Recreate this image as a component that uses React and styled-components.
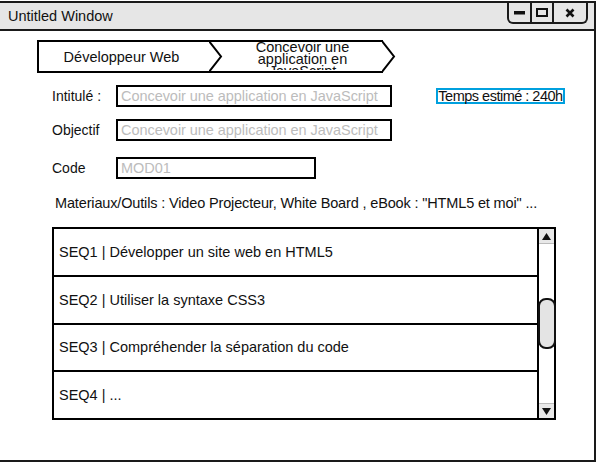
import React from 'react';
import styled, { createGlobalStyle } from "styled-components";

const Global = createGlobalStyle`
  html, body {
    margin: 0;
    padding: 0;
    background: #ffffff;
  }
  body {
    font-family: "Liberation Sans", Arial, sans-serif;
    font-size: 14.5px;
    color: #111;
  }
`;

const Window = styled.div`
  box-sizing: border-box;
  width: 596px;
  height: 461px;
  margin-top: 1px;
  border: 2px solid #1a1a1a;
  border-left: none;
  display: flex;
  flex-direction: column;
  background: #fff;
`;

const TitleBar = styled.div`
  display: flex;
  align-items: flex-start;
  height: 26px;
  background: #e6e6e6;
  border-bottom: 2px solid #1a1a1a;
`;

const Title = styled.div`
  padding-left: 8px;
  line-height: 27px;
`;

const Controls = styled.div`
  display: flex;
  margin-left: auto;
  margin-right: 6px;
  height: 19px;
  border: 2px solid #1a1a1a;
  border-top: none;
  border-radius: 0 0 6px 6px;
`;

const CtrlButton = styled.div`
  width: ${(props) => props.w}px;
  display: flex;
  align-items: center;
  justify-content: center;
  border-left: ${(props) => (props.first ? "none" : "2px solid #1a1a1a")};
`;

const Body = styled.div`
  flex: 1;
  display: flex;
  flex-direction: column;
  padding-top: 9px;
`;

const Breadcrumb = styled.div`
  display: flex;
  margin-left: 37px;
`;

const Crumb = styled.div`
  position: relative;
  box-sizing: border-box;
  width: 173px;
  height: 33px;
  border-top: 2px solid #000;
  border-bottom: 2px solid #000;
  border-left: ${(props) => (props.first ? "2px solid #000" : "none")};
  padding-left: ${(props) => (props.first ? "0" : "12px")};
  padding-right: ${(props) => (props.first ? "6px" : "0")};
`;

const CrumbText = styled.div`
  height: 29px;
  overflow: hidden;
  display: flex;
  flex-direction: column;
  align-items: center;
  justify-content: ${(props) => (props.multi ? "flex-start" : "center")};
  text-align: center;
  line-height: ${(props) => (props.multi ? "12px" : "16px")};
  margin-top: ${(props) => (props.multi ? "-1px" : "0")};
`;

const Chevron = styled.svg`
  position: absolute;
  right: -13px;
  top: -2px;
`;

const Form = styled.div`
  display: flex;
  flex-direction: column;
  padding-left: 52px;
  margin-top: 12px;
`;

const Row = styled.div`
  display: flex;
  align-items: center;
  margin-top: ${(props) => props.mt || 0}px;
`;

const Label = styled.div`
  width: 64px;
  font-size: 14px;
`;

const Field = styled.div`
  box-sizing: border-box;
  width: ${(props) => props.w}px;
  height: 22px;
  border: 2px solid #000;
  padding-left: 3px;
  line-height: 18px;
  color: #bcbcbc;
  letter-spacing: -0.05px;
  white-space: nowrap;
  overflow: hidden;
`;

const Estimate = styled.div`
  box-sizing: border-box;
  margin-left: 44px;
  width: 129px;
  height: 16px;
  border: 2px solid #00a0de;
  line-height: 12px;
  text-align: center;
  letter-spacing: -0.5px;
  white-space: nowrap;
`;

const Materials = styled.div`
  margin-top: 14px;
  padding-left: 3px;
  height: 20px;
  line-height: 20px;
  letter-spacing: -0.15px;
`;

const List = styled.div`
  box-sizing: border-box;
  display: flex;
  width: 504px;
  height: 193px;
  margin-top: 14px;
  border: 2px solid #000;
`;

const Items = styled.div`
  flex: 1;
  display: flex;
  flex-direction: column;
`;

const Item = styled.div`
  flex: 1;
  display: flex;
  align-items: center;
  padding-left: 5px;
  border-top: ${(props) => (props.first ? "none" : "2px solid #000")};
`;

const Scrollbar = styled.div`
  width: 15px;
  border-left: 2px solid #000;
  display: flex;
  flex-direction: column;
`;

const Arrow = styled.div`
  height: 14px;
  background: #e8e8e8;
  display: flex;
  align-items: center;
  justify-content: center;
  border-top: ${(props) => (props.down ? "1px solid #bbb" : "none")};
  border-bottom: ${(props) => (props.down ? "none" : "1px solid #bbb")};
`;

const Track = styled.div`
  flex: 1;
  display: flex;
  flex-direction: column;
  padding-top: 54px;
`;

const Thumb = styled.div`
  box-sizing: border-box;
  height: 51px;
  margin-left: -1px;
  margin-right: -2px;
  border: 2px solid #111;
  border-radius: 8px;
  background: #e4e4e4;
`;

const items = [
  "SEQ1 | Développer un site web en HTML5",
  "SEQ2 | Utiliser la syntaxe CSS3",
  "SEQ3 | Compréhender la séparation du code",
  "SEQ4 | ...",
];

function App() {
  return (
    <>
      <Global />
      <Window>
        <TitleBar>
          <Title>Untitled Window</Title>
          <Controls>
            <CtrlButton w={21} first>
              <svg width="11" height="4"><rect x="0" y="0" width="11" height="3.5" fill="#111" /></svg>
            </CtrlButton>
            <CtrlButton w={20}>
              <svg width="12" height="9"><rect x="1" y="1" width="10" height="7" fill="none" stroke="#111" strokeWidth="2" /></svg>
            </CtrlButton>
            <CtrlButton w={32}>
              <svg width="10" height="10"><path d="M1.5 1.5 L8.5 8.5 M8.5 1.5 L1.5 8.5" stroke="#111" strokeWidth="2.6" /></svg>
            </CtrlButton>
          </Controls>
        </TitleBar>

        <Body>
          <Breadcrumb>
            <Crumb first>
              <CrumbText>Développeur Web</CrumbText>
              <Chevron width="14" height="33">
                <polyline points="0,1 12,16.5 0,32" fill="none" stroke="#000" strokeWidth="2" />
              </Chevron>
            </Crumb>
            <Crumb>
              <CrumbText multi>
                <span>Concevoir une</span>
                <span>application en</span>
                <span>JavaScript</span>
              </CrumbText>
              <Chevron width="14" height="33">
                <polyline points="0,1 12,16.5 0,32" fill="none" stroke="#000" strokeWidth="2" />
              </Chevron>
            </Crumb>
          </Breadcrumb>

          <Form>
            <Row>
              <Label>Intitulé :</Label>
              <Field w={276}>Concevoir une application en JavaScript</Field>
              <Estimate>Temps estimé : 240h</Estimate>
            </Row>
            <Row mt={12}>
              <Label>Objectif</Label>
              <Field w={276}>Concevoir une application en JavaScript</Field>
            </Row>
            <Row mt={16}>
              <Label>Code</Label>
              <Field w={200}>MOD01</Field>
            </Row>
            <Materials>Materiaux/Outils : Video Projecteur, White Board , eBook : "HTML5 et moi" ...</Materials>
            <List>
              <Items>
                {items.map((text, i) => (
                  <Item key={i} first={i === 0}>{text}</Item>
                ))}
              </Items>
              <Scrollbar>
                <Arrow>
                  <svg width="9" height="7"><polygon points="4.5,0 9,7 0,7" fill="#111" /></svg>
                </Arrow>
                <Track>
                  <Thumb />
                </Track>
                <Arrow down>
                  <svg width="9" height="7"><polygon points="0,0 9,0 4.5,7" fill="#111" /></svg>
                </Arrow>
              </Scrollbar>
            </List>
          </Form>
        </Body>
      </Window>
    </>
  );
}

export default App;
